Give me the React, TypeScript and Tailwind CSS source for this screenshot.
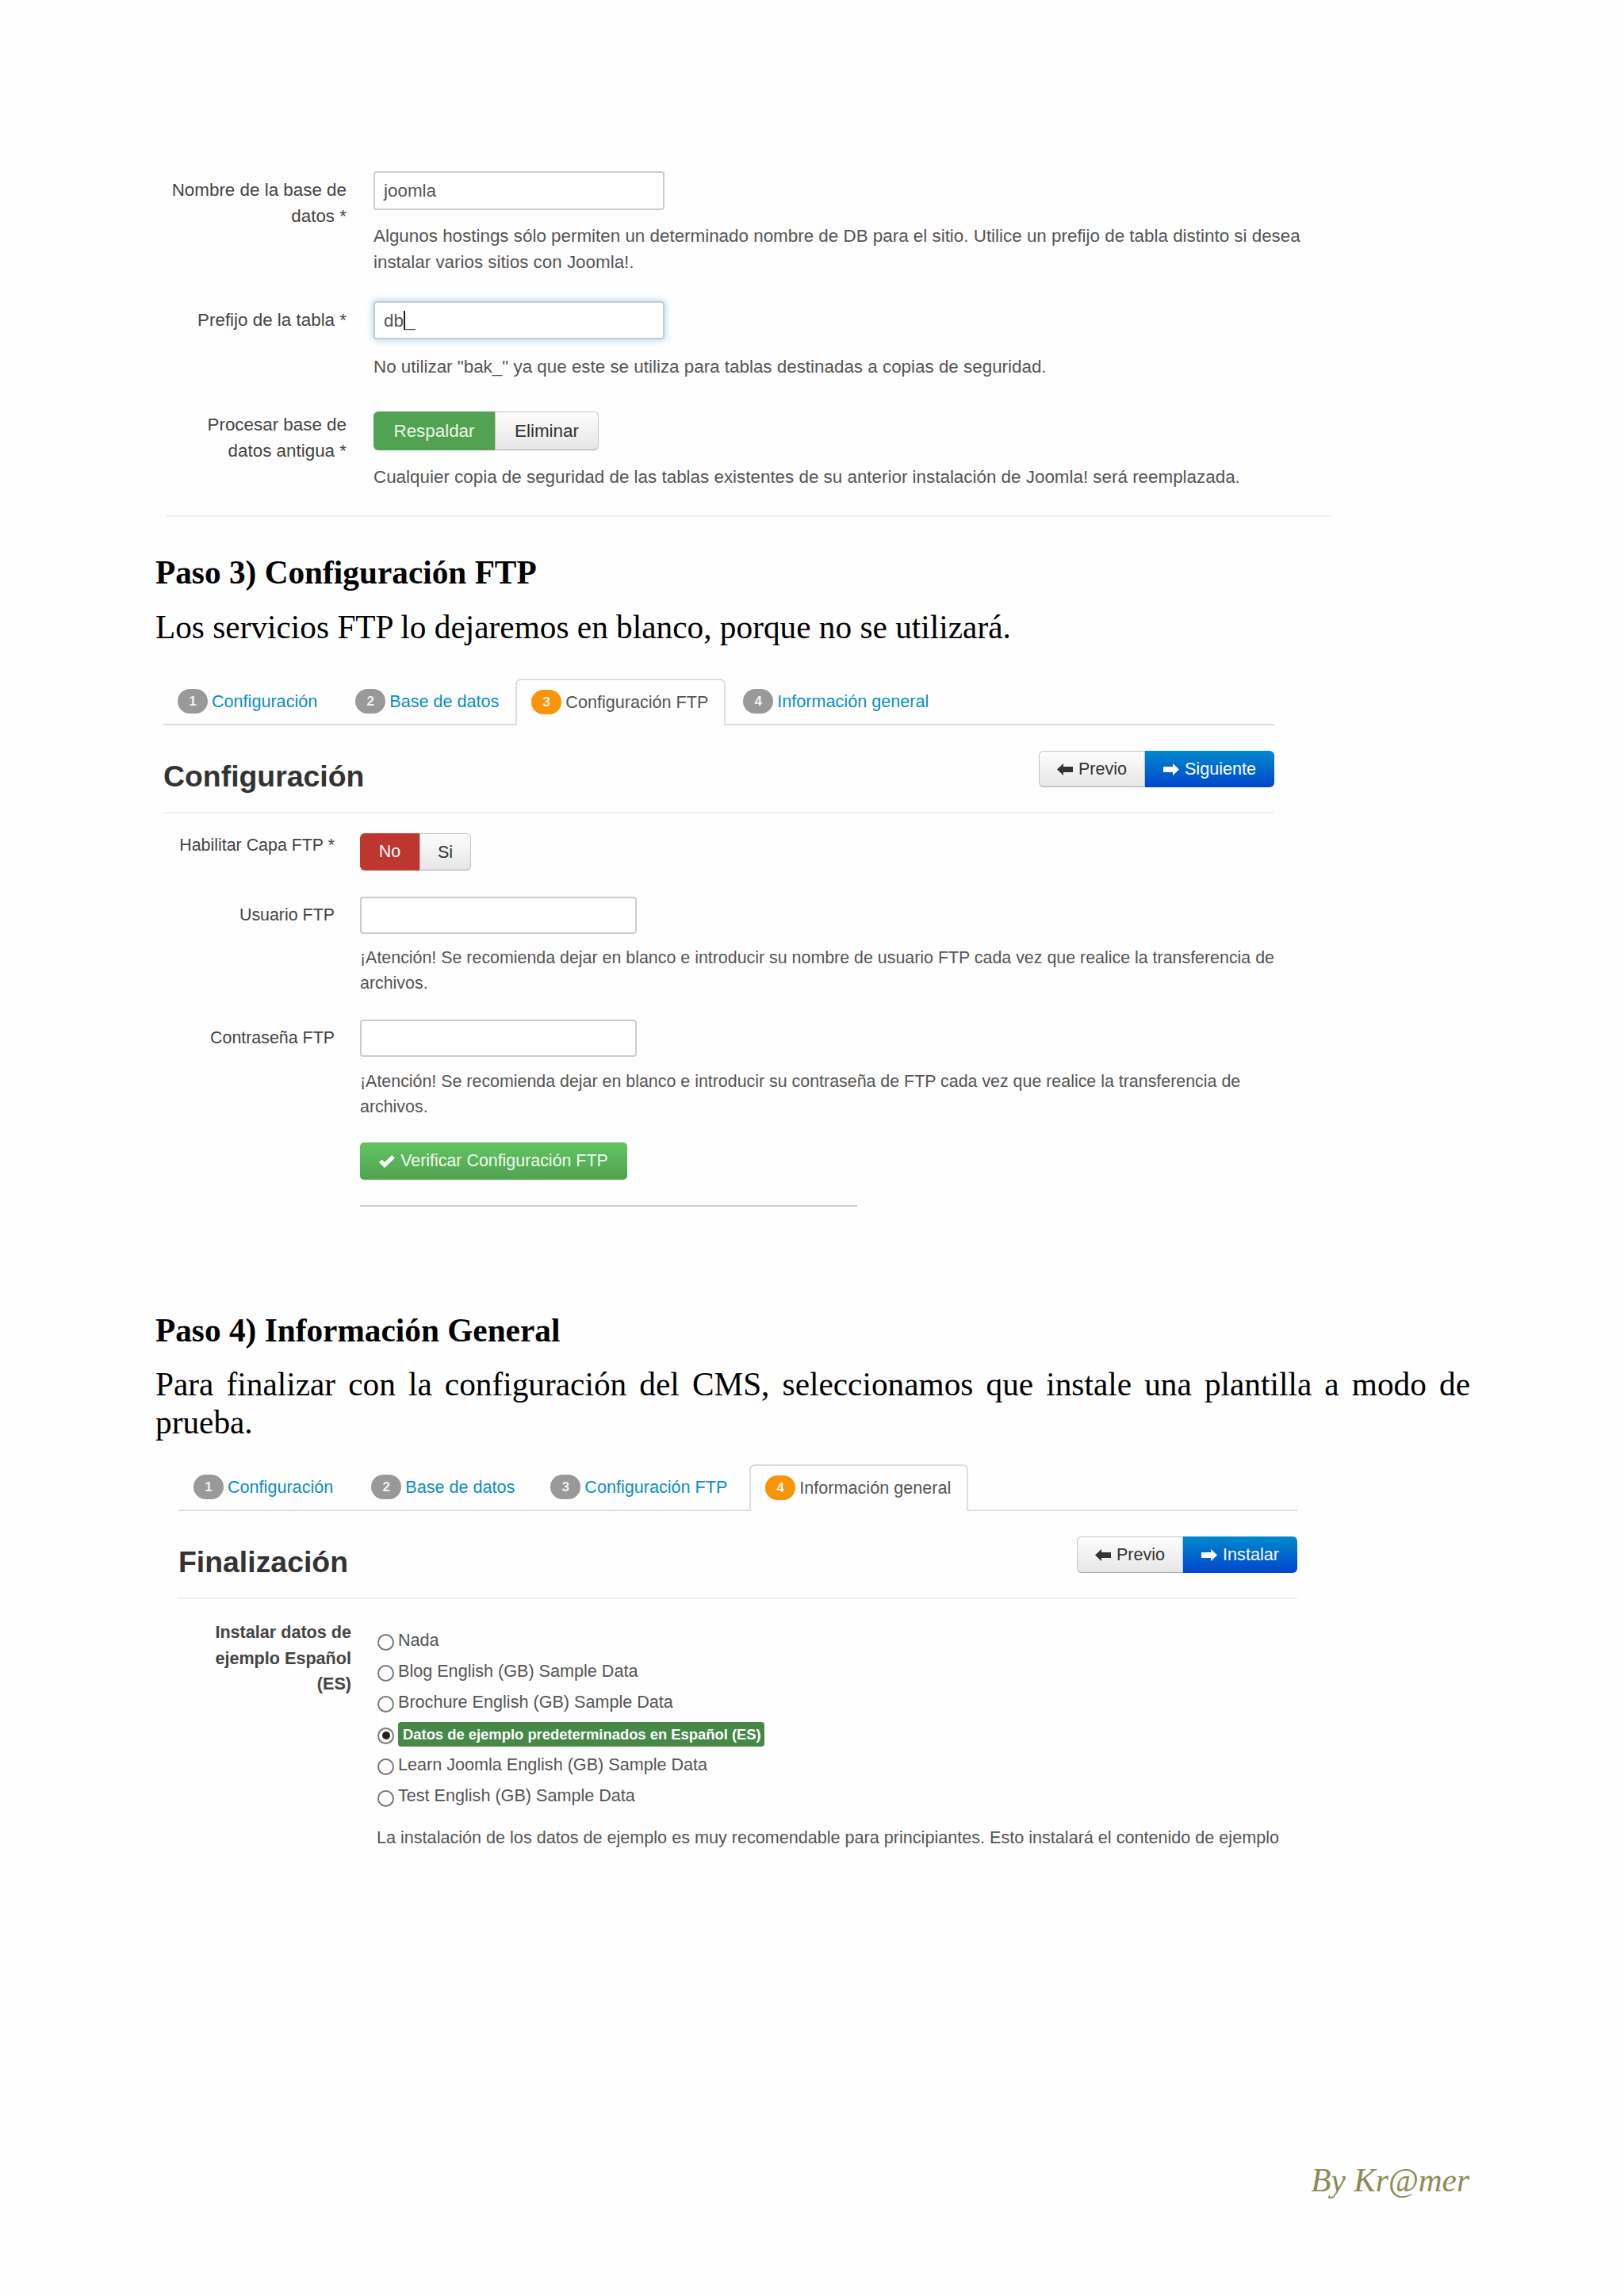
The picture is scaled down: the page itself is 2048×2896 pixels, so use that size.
const sans = "font-['Liberation_Sans',Arial,sans-serif]";

function ArrowIcon({ dir, color }: { dir: "left" | "right"; color: string }) {
  return (
    <svg width="20" height="15" viewBox="0 0 20 15" className={dir === "right" ? "rotate-180" : ""}>
      <path d="M0 7.5 L8 0 V4 H20 V11 H8 V15 Z" fill={color} />
    </svg>
  );
}

function CheckIcon() {
  return (
    <svg width="20" height="16" viewBox="0 0 20 16">
      <path d="M0 9 L3.5 5.5 L7 9 L16 0 L20 3.5 L7 16 Z" fill="#fff" />
    </svg>
  );
}

function Badge({ n, active }: { n: number; active?: boolean }) {
  return (
    <span
      className={`flex h-[31px] w-[38px] items-center justify-center rounded-full text-[17px] font-bold text-[#f2f2f2] ${
        active ? "bg-[#f89406]" : "bg-[#999999]"
      }`}
    >
      {n}
    </span>
  );
}

const tabNames = ["Configuración", "Base de datos", "Configuración FTP", "Información general"];

function Tabs({ active, gaps }: { active: number; gaps: string[] }) {
  return (
    <div className="flex h-[59px] border-b-2 border-[#dddddd]">
      {tabNames.map((name, i) => (
        <div
          key={name}
          className={`-mb-[2px] flex h-[59px] items-center gap-[5px] pb-[2px] pr-[20px] ${gaps[i]} ${
            i === active
              ? "rounded-t-[7px] border-2 border-b-0 border-[#dddddd] bg-[#fefefe] pl-[18px] text-[#555555]"
              : "pl-[20px] text-[#0b8cc9]"
          }`}
        >
          <Badge n={i + 1} active={i === active} />
          <span className="text-[21.6px] leading-[30px]">{name}</span>
        </div>
      ))}
    </div>
  );
}

function PlainButton({ children, className }: { children: React.ReactNode; className?: string }) {
  return (
    <div
      className={`flex items-center justify-center gap-[7px] border border-[#c4c4c4] border-b-[#a8a8a8] bg-linear-to-b from-[#fdfdfd] to-[#e6e6e6] text-[21.6px] text-[#333333] ${className ?? ""}`}
    >
      {children}
    </div>
  );
}

function PanelHeader({ title, next, w1, w2 }: { title: string; next: string; w1: string; w2: string }) {
  return (
    <div className="flex h-[79px] justify-between border-b-2 border-[#f0f0f0]">
      <h2 className="pt-[10px] text-[37.4px] font-bold leading-[44px] text-[#333333]">{title}</h2>
      <div className="flex h-[46px]">
        <PlainButton className={`rounded-l-[6px] ${w1}`}>
          <ArrowIcon dir="left" color="#333333" />
          Previo
        </PlainButton>
        <div
          className={`flex items-center justify-center gap-[7px] rounded-r-[6px] bg-linear-to-b from-[#0088cc] to-[#0044cc] text-[21.6px] text-white ${w2}`}
        >
          <ArrowIcon dir="right" color="#ffffff" />
          {next}
        </div>
      </div>
    </div>
  );
}

function Field({ className, children }: { className?: string; children?: React.ReactNode }) {
  return (
    <div
      className={`flex items-center rounded-[4px] border-2 border-[#cccccc] bg-white pl-[11px] text-[22.4px] text-[#555555] ${className ?? ""}`}
    >
      {children}
    </div>
  );
}

function Radio({ label, checked }: { label: string; checked?: boolean }) {
  return (
    <div className="flex h-[39.4px] items-center gap-[5px]">
      <span className="mt-[3px] flex h-[21px] w-[21px] shrink-0 items-center justify-center rounded-full border-2 border-[#777777] bg-white">
        {checked && <span className="h-[10px] w-[10px] rounded-full bg-[#222222]" />}
      </span>
      {checked ? (
        <span className="flex h-[31px] w-[462px] items-center rounded-[4px] bg-[#468847] pl-[6px] text-[18.4px] font-bold text-white">
          {label}
        </span>
      ) : (
        <span className="-mt-[2px] text-[21.6px] text-[#555555]">{label}</span>
      )}
    </div>
  );
}

export default function App() {
  return (
    <div className={`flex h-[2896px] w-[2048px] flex-col bg-[#fefefe] ${sans}`}>
      {/* database form, end of step 2 */}
      <div className="ml-[196px] w-[1484px] pt-[216px] text-[22.4px] leading-[33px] text-[#555555]">
        <div className="flex gap-[34px]">
          <label className="w-[241px] shrink-0 pt-[7px] text-right text-[#444444]">
            Nombre de la base de
            <br />
            datos *
          </label>
          <div>
            <Field className="h-[49px] w-[367px]">joomla</Field>
            <p className="mt-[16px] w-[1200px]">
              Algunos hostings sólo permiten un determinado nombre de DB para el sitio. Utilice un prefijo de tabla
              distinto si desea
              <br />
              instalar varios sitios con Joomla!.
            </p>
          </div>
        </div>
        <div className="mt-[33px] flex gap-[34px]">
          <label className="w-[241px] shrink-0 pt-[7px] text-right text-[#444444]">Prefijo de la tabla *</label>
          <div>
            <Field className="h-[48px] w-[367px] border-[#6db3ea] shadow-[0_0_10px_rgba(82,168,236,0.6)]">
              db
              <span className="inline-block h-[24px] w-[2px] bg-[#222222]" />_
            </Field>
            <p className="mt-[18px]">No utilizar "bak_" ya que este se utiliza para tablas destinadas a copias de seguridad.</p>
          </div>
        </div>
        <div className="mt-[40px] flex gap-[34px]">
          <label className="w-[241px] shrink-0 text-right text-[#444444]">
            Procesar base de
            <br />
            datos antigua *
          </label>
          <div>
            <div className="flex h-[49px]">
              <div className="flex w-[153px] items-center justify-center rounded-l-[6px] bg-[#51a351] text-[#eaf5ea]">
                Respaldar
              </div>
              <PlainButton className="w-[131px] rounded-r-[6px] text-[22.4px]">Eliminar</PlainButton>
            </div>
            <p className="mt-[17px]">
              Cualquier copia de seguridad de las tablas existentes de su anterior instalación de Joomla! será
              reemplazada.
            </p>
          </div>
        </div>
      </div>
      <div className="ml-[209px] mt-[32px] h-[2px] w-[1470px] bg-[#f0f0f2]" />

      {/* step 3 */}
      <div className="ml-[196px] font-['Liberation_Serif',serif] text-[41.3px] leading-[48px] text-black">
        <h1 className="mt-[46px] font-bold">Paso 3) Configuración FTP</h1>
        <p className="mt-[21px]">Los servicios FTP lo dejaremos en blanco, porque no se utilizará.</p>
      </div>
      <div className="ml-[206px] mt-[41px] w-[1401px]">
        <Tabs active={2} gaps={["-ml-[2px] mr-[8px]", "mr-[1px]", "mr-[2px]", ""]} />
        <div className="mt-[32px]">
          <PanelHeader title="Configuración" next="Siguiente" w1="w-[134px]" w2="w-[163px]" />
        </div>
        <div className="text-[21.4px] leading-[31.5px] text-[#555555]">
          <div className="mt-[25px] flex gap-[32px]">
            <label className="w-[216px] shrink-0 text-right text-[#444444]">Habilitar Capa FTP *</label>
            <div className="flex h-[47px]">
              <div className="flex w-[75px] items-center justify-center rounded-l-[6px] bg-[#bd362f] text-white">No</div>
              <PlainButton className="w-[65px] rounded-r-[6px]">Si</PlainButton>
            </div>
          </div>
          <div className="mt-[33px] flex gap-[32px]">
            <label className="w-[216px] shrink-0 pt-[8px] text-right text-[#444444]">Usuario FTP</label>
            <div>
              <Field className="h-[47px] w-[349px]" />
              <p className="mt-[15px] w-[1160px]">
                ¡Atención! Se recomienda dejar en blanco e introducir su nombre de usuario FTP cada vez que realice la
                transferencia de
                <br />
                archivos.
              </p>
            </div>
          </div>
          <div className="mt-[30px] flex gap-[32px]">
            <label className="w-[216px] shrink-0 pt-[8px] text-right text-[#444444]">Contraseña FTP</label>
            <div>
              <Field className="h-[47px] w-[349px]" />
              <p className="mt-[16px] w-[1160px]">
                ¡Atención! Se recomienda dejar en blanco e introducir su contraseña de FTP cada vez que realice la
                transferencia de
                <br />
                archivos.
              </p>
              <div className="mt-[29px] flex h-[47px] w-[337px] items-center justify-center gap-[7px] rounded-[5px] bg-linear-to-b from-[#62c462] to-[#51a351] text-[#f0faf0]">
                <CheckIcon />
                Verificar Configuración FTP
              </div>
              <div className="mt-[32px] h-[2px] w-[627px] bg-[#cccccc]" />
            </div>
          </div>
        </div>
      </div>

      {/* step 4 */}
      <div className="ml-[196px] w-[1658px] font-['Liberation_Serif',serif] text-[41.3px] leading-[48px] text-black">
        <h1 className="mt-[132px] font-bold">Paso 4) Información General</h1>
        <p className="mt-[20px] text-justify">
          Para finalizar con la configuración del CMS, seleccionamos que instale una plantilla a modo de prueba.
        </p>
      </div>
      <div className="ml-[225px] mt-[29px] w-[1411px]">
        <Tabs active={3} gaps={["-ml-[1px] mr-[8px]", "mr-[5px]", "mr-[8px]", ""]} />
        <div className="mt-[32px]">
          <PanelHeader title="Finalización" next="Instalar" w1="w-[134px]" w2="w-[144px]" />
        </div>
        <div className="mt-[26px] flex gap-[33px] text-[21.6px] text-[#555555]">
          <label className="w-[218px] shrink-0 text-right font-bold leading-[32.5px] text-[#444444]">
            Instalar datos de
            <br />
            ejemplo Español
            <br />
            (ES)
          </label>
          <div className="pt-[7px]">
            <Radio label="Nada" />
            <Radio label="Blog English (GB) Sample Data" />
            <Radio label="Brochure English (GB) Sample Data" />
            <Radio label="Datos de ejemplo predeterminados en Español (ES)" checked />
            <Radio label="Learn Joomla English (GB) Sample Data" />
            <Radio label="Test English (GB) Sample Data" />
            <p className="mt-[16px] -ml-[1px] whitespace-nowrap leading-[32px]">
              La instalación de los datos de ejemplo es muy recomendable para principiantes. Esto instalará el contenido
              de ejemplo
            </p>
          </div>
        </div>
      </div>

      <p className="mb-[122px] mr-[195px] mt-auto text-right font-['Liberation_Serif',serif] text-[41.3px] italic leading-[48px] text-[#8b8b55]">
        By Kr@mer
      </p>
    </div>
  );
}
